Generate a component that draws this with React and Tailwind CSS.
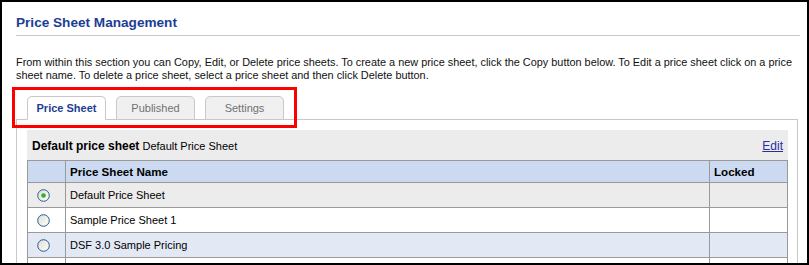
const ROWS = [
  { name: 'Default Price Sheet', checked: true, bg: 'bg-[#ececec]' },
  { name: 'Sample Price Sheet 1', checked: false, bg: 'bg-white' },
  { name: 'DSF 3.0 Sample Pricing', checked: false, bg: 'bg-[#e3e9f4]' },
  { name: '', checked: false, bg: 'bg-white' },
]

const TABS = ['Price Sheet', 'Published', 'Settings']

function Radio({ checked }) {
  return (
    <svg width="13" height="13" viewBox="0 0 13 13" className="block">
      <defs>
        <linearGradient id="rfill" x1="0" y1="0" x2="1" y2="1">
          <stop offset="0" stopColor="#dcdcd6" />
          <stop offset="1" stopColor="#ffffff" />
        </linearGradient>
      </defs>
      <circle cx="6.5" cy="6.5" r="5.8" fill="url(#rfill)" stroke="#2c5a8c" strokeWidth="1" />
      {checked && <circle cx="6.5" cy="6.5" r="2.3" fill="#2fb12f" />}
    </svg>
  )
}

export default function App() {
  return (
    <div className="relative w-[809px] h-[265px] overflow-hidden border-2 border-black bg-white font-['Liberation_Sans',Arial,sans-serif] text-black">
      <div className="pl-[14px] pr-[7px]">
        <h1 className="pt-[13px] pb-[4px] border-b border-[#c9c9c9] text-[13.6px] leading-[16px] font-bold text-[#1c3d94]">
          Price Sheet Management
        </h1>

        <p className="mt-[20px] text-[10.9px] leading-[13px] text-[#111]">
          From within this section you can Copy, Edit, or Delete price sheets. To create a new price sheet, click the Copy button below. To Edit a price sheet click on a price
          <br />
          sheet name. To delete a price sheet, select a price sheet and then click Delete button.
        </p>

        <div className="mt-[14px] mr-[2px]">
          <div className="flex items-end gap-[10px] pl-[11px] border-b border-[#c8c8c8]">
            {TABS.map((tab, i) => (
              <div
                key={tab}
                className={`-mb-px flex h-[24px] w-[79px] items-center justify-center rounded-t-[5px] border text-[11px] ${
                  i === 0
                    ? 'bg-white border-[#c8c8c8] border-b-white font-bold text-[10.5px] text-[#1c3d94]'
                    : 'bg-[#f0f0f0] border-[#c8c8c8] text-[#707070]'
                }`}
              >
                {tab}
              </div>
            ))}
          </div>

          <div className="border-x border-b border-[#c8c8c8] pl-[10px] pr-[9px] pt-[10px]">
            <div className="bg-[#ececec]">
              <div className="flex h-[30px] items-center justify-between px-[5px] pt-[1px]">
                <span className="text-[11px]">
                  <span className="text-[12px] font-bold">Default price sheet</span> Default Price Sheet
                </span>
                <a href="#" className="text-[12px] text-[#2b2ba3] underline">
                  Edit
                </a>
              </div>

              <table className="w-full border-collapse text-[11px]">
                <thead>
                  <tr className="bg-[#cbdaf0]">
                    <th className="w-[38px] h-[22px] border border-[#999]" />
                    <th className="h-[22px] border border-[#999] pl-[4px] text-left text-[11.6px] font-bold">
                      Price Sheet Name
                    </th>
                    <th className="w-[78px] h-[22px] border border-[#999] pl-[4px] text-left text-[11.6px] font-bold">
                      Locked
                    </th>
                  </tr>
                </thead>
                <tbody>
                  {ROWS.map((row, i) => (
                    <tr key={i} className={row.bg}>
                      <td className="h-[25px] border border-[#999] pl-[9px]">
                        {row.name && <Radio checked={row.checked} />}
                      </td>
                      <td className="h-[25px] border border-[#999] pl-[4px]">{row.name}</td>
                      <td className="h-[25px] border border-[#999]" />
                    </tr>
                  ))}
                </tbody>
              </table>
            </div>
          </div>
        </div>
      </div>

      <div className="absolute left-[10px] top-[85px] h-[41px] w-[285px] border-[3px] border-[#ff0000]" />
    </div>
  )
}
